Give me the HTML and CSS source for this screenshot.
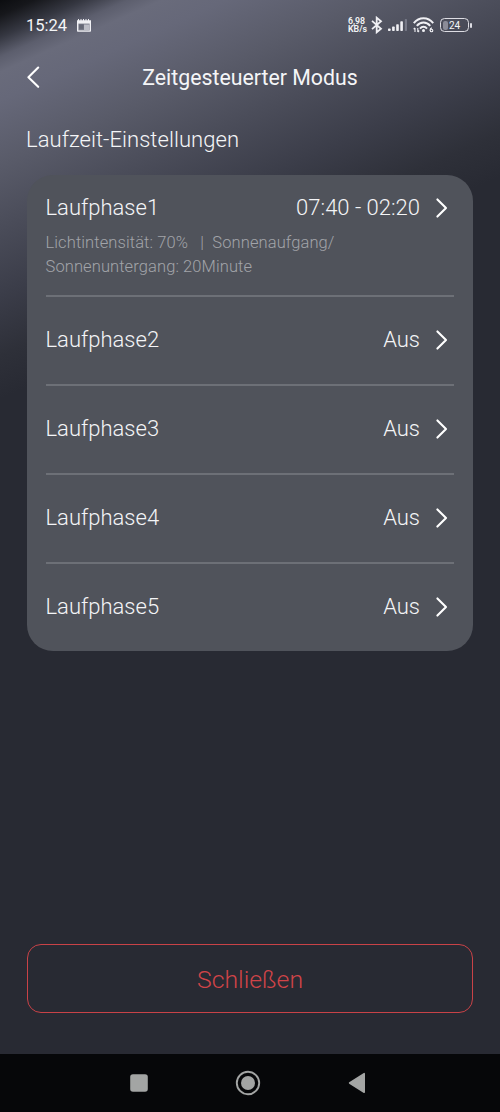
FILE: index.html
```html
<!DOCTYPE html>
<html lang="de">
<head>
<meta charset="utf-8">
<title>Zeitgesteuerter Modus</title>
<link rel="stylesheet" href="styles.css">
</head>
<body>
<div class="screen">
  <div class="status">
    <span class="clock">15:24</span>
    <svg class="cal" width="14" height="13" viewBox="0 0 14 13"><path d="M0 1.200h1V0h1v1.200h1.500V0h1v1.200H6V0h1v1.200h1.500V0h1v1.200H11V0h1v1.200h2V12a.8.8 0 0 1-.8.8H.8A.8.8 0 0 1 0 12z" fill="#f0f0f4"/><path d="M1.400 4.600h11.200v6.800H1.400z" fill="#777987"/><path d="M7 5.500h5.600v5.900H7z" fill="#bcbdc6"/><path d="M2.200 5.500h4.300v4.300H2.200z" fill="#656775"/></svg>
    <div class="speed"><span>6,98</span><span>KB/s</span></div>
    <svg class="bt" width="12" height="18" viewBox="0 0 12 18" fill="none" stroke="#f0f0f4" stroke-width="1.800"><path d="M1 4.800l9 8L5.700 16.300V1.700L10 5.200l-9 8"/></svg>
    <svg class="signal" width="20" height="14" viewBox="0 0 20 14" fill="#f0f0f4"><rect x="0" y="10.500" width="2.600" height="2.500" rx=".7"/><rect x="4.100" y="8.500" width="2.600" height="4.500" rx=".7"/><rect x="8.200" y="6.200" width="2.600" height="6.800" rx=".7"/><rect x="12.300" y="3.200" width="2.600" height="9.800" rx=".7"/><rect x="16.800" y="1" width="2.200" height="12" rx=".7" fill="#777987"/></svg>
    <svg class="wifi" width="21" height="16" viewBox="0 0 21 16" fill="none" stroke="#f0f0f4" stroke-width="2"><path d="M.8 6.200C6-.3 15-.3 20.200 6.200M3.800 8.900c3.800-4.500 9.600-4.500 13.400 0M7 11.600c2-2.400 5-2.400 7 0"/><circle cx="10.500" cy="13.600" r="1.500" fill="#f0f0f4" stroke="none"/><path d="M2 15v-4M.6 12.200L2 10.800M4.800 11v4M4.800 15l1.400-1.400" stroke-width="1.100"/><path d="M19 10.900c-1.500.2-2 1.400-2 2.600" stroke-width="1.100"/><circle cx="18.500" cy="13.500" r="1.300" stroke-width="1.100"/></svg>
    <div class="battery"><span class="level"></span><span class="pct">24</span></div>
    <span class="tip"></span>
  </div>
  <div class="titlebar">
    <svg class="back" width="14" height="24" viewBox="0 0 14 24" fill="none" stroke="#fff" stroke-width="2.100" stroke-linecap="round" stroke-linejoin="round"><path d="M12.200 2.600L2.400 12.200L12.200 21.800"/></svg>
    <h1>Zeitgesteuerter Modus</h1>
  </div>
  <h2>Laufzeit-Einstellungen</h2>
  <div class="card">
    <div class="row first">
      <div class="line"><span class="name">Laufphase1</span><span class="value">07:40 - 02:20</span><svg class="chev" width="14" height="22" viewBox="0 0 14 22"><path d="M2.400 2.400L11 11L2.400 19.600"/></svg></div>
      <p class="detail">Lichtintensität: 70%&nbsp;&nbsp; |&nbsp; Sonnenaufgang/<br>Sonnenuntergang: 20Minute</p>
    </div>
    <div class="row"><div class="line"><span class="name">Laufphase2</span><span class="value">Aus</span><svg class="chev" width="14" height="22" viewBox="0 0 14 22"><path d="M2.400 2.400L11 11L2.400 19.600"/></svg></div></div>
    <div class="row"><div class="line"><span class="name">Laufphase3</span><span class="value">Aus</span><svg class="chev" width="14" height="22" viewBox="0 0 14 22"><path d="M2.400 2.400L11 11L2.400 19.600"/></svg></div></div>
    <div class="row"><div class="line"><span class="name">Laufphase4</span><span class="value">Aus</span><svg class="chev" width="14" height="22" viewBox="0 0 14 22"><path d="M2.400 2.400L11 11L2.400 19.600"/></svg></div></div>
    <div class="row"><div class="line"><span class="name">Laufphase5</span><span class="value">Aus</span><svg class="chev" width="14" height="22" viewBox="0 0 14 22"><path d="M2.400 2.400L11 11L2.400 19.600"/></svg></div></div>
  </div>
  <button class="close">Schließen</button>
  <div class="nav">
    <svg width="18" height="18" viewBox="0 0 18 18"><rect x=".2" y=".2" width="17.600" height="17.600" rx="2.800" fill="#a3a5a4"/></svg>
    <svg width="26" height="26" viewBox="0 0 26 26"><circle cx="13" cy="13" r="11.200" fill="none" stroke="#a3a5a4" stroke-width="1.900"/><circle cx="13" cy="13" r="7" fill="#a3a5a4"/></svg>
    <svg width="18" height="22" viewBox="0 0 18 22"><path d="M1.600 11L16.200 1.700V20.300z" fill="#a3a5a4" stroke="#a3a5a4" stroke-width="1.600" stroke-linejoin="round"/></svg>
  </div>
</div>
</body>
</html>
```
FILE: styles.css
```css
* { box-sizing: border-box; }
body { margin: 0; font-family: Roboto, sans-serif; color: #f4f5f7; }
.screen {
  width: 500px; height: 1112px; display: flex; flex-direction: column; overflow: hidden;
  background: linear-gradient(156deg, #0c0d10 0, #16171b 14px, #353741 34px, #5c5e6d 52px, #696b7b 66px, #666879 92px, #595b69 150px, #4b4d5a 205px, #3b3d49 270px, #2e3039 325px, #282a33 365px, #282a33 100%);
}
.status { height: 50px; display: flex; align-items: center; padding-left: 26px; }
.clock { font-size: 16.500px; font-weight: 450; width: 51px; line-height: 20px; padding-top: 2px; }
.speed { display: flex; flex-direction: column; margin-left: 257px; width: 23px; font-size: 8.800px; line-height: 8px; font-weight: 600; }
.signal { margin-left: 5px; }
.wifi { margin-left: 5px; }
.battery { position: relative; margin-left: 6px; width: 29px; height: 14px; border: 1.500px solid #dddde3; border-radius: 4.500px; text-align: center; font-size: 10px; font-weight: 400; line-height: 13px; }
.level { position: absolute; left: 2px; top: 1.500px; width: 5px; height: 9px; border-radius: 2px; background: #8b8c98; }
.pct { position: relative; }
.tip { width: 2px; height: 5px; margin-left: 1px; border-radius: 1px; background: #dddde3; }
.titlebar { height: 54px; display: grid; grid-template-columns: 14px 1fr 14px; align-items: center; padding: 0 26px; }
h1, h2 { margin: 0; line-height: 28px; }
h1 { font-size: 21.300px; font-weight: 400; text-align: center; padding-top: 1px; }
h2 { font-size: 22px; font-weight: 300; margin: 22px 0 0 26px; letter-spacing: .05px; }
.card { margin: 21px 27px 0 26.500px; height: 476px; padding: 0 19px; border-radius: 26px; background: #50535b; flex: none; }
.row { height: 89px; display: flex; flex-direction: column; justify-content: center; border-top: 2px solid #6d7077; }
.first { height: 120px; border-top: 0; justify-content: flex-start; padding-top: 18px; }
.line { display: flex; align-items: center; height: 28px; font-size: 22px; font-weight: 300; padding-right: 5px; }
.name, .value { line-height: 28px; }
.row:not(.first) .line { padding-bottom: 1px; }
.value { margin-left: auto; margin-right: 15px; }
.first .name, .first .value { padding: 1px 0 0; }
.first .chev { margin-top: 1px; }
.chev { fill: none; stroke: #fff; stroke-width: 2.100; stroke-linecap: round; stroke-linejoin: round; }
.detail { margin: 10px 0 0; font-size: 16.500px; line-height: 24px; letter-spacing: .1px; font-weight: 300; color: #a2a4a9; }
.close { margin: 293px 27px 0; height: 69px; flex: none; border: 1.500px solid #c94247; border-radius: 14px; background: none; color: #d04448; font: 300 24.800px Roboto, sans-serif; padding-top: 3px; }
.nav { margin-top: auto; height: 58px; background: #060709; display: flex; justify-content: space-between; align-items: center; padding: 0 134px 0 130px; }
```
